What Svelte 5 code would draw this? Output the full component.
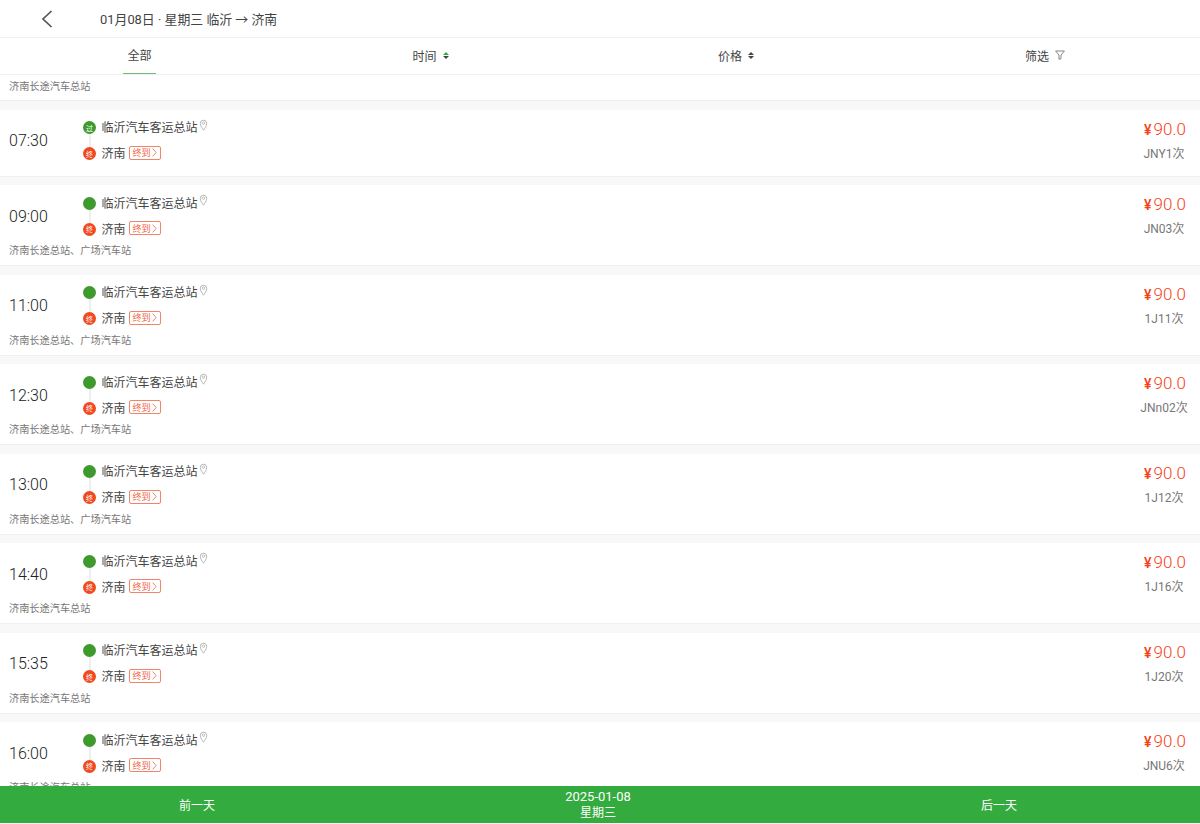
<script>
const rows = [
  { time: '07:30', code: 'JNY1次', pass: true, note: '' },
  { time: '09:00', code: 'JN03次', note: '济南长途总站、广场汽车站' },
  { time: '11:00', code: '1J11次', note: '济南长途总站、广场汽车站' },
  { time: '12:30', code: 'JNn02次', note: '济南长途总站、广场汽车站' },
  { time: '13:00', code: '1J12次', note: '济南长途总站、广场汽车站' },
  { time: '14:40', code: '1J16次', note: '济南长途汽车总站' },
  { time: '15:35', code: '1J20次', note: '济南长途汽车总站' },
  { time: '16:00', code: 'JNU6次', note: '济南长途汽车总站' }
];
</script>

<div class="page">
  <header class="topbar">
    <svg class="back" width="12" height="18" viewBox="0 0 12 18"><path d="M10.5 1 2 9l8.5 8" fill="none" stroke="#555" stroke-width="1.7"/></svg>
    <span class="title">01月08日 · 星期三 临沂 → 济南</span>
  </header>

  <nav class="tabs">
    <div class="tab active"><span>全部</span></div>
    <div class="tab">
      <span>时间</span>
      <span class="sort"><i class="up green"></i><i class="down"></i></span>
    </div>
    <div class="tab">
      <span>价格</span>
      <span class="sort"><i class="up"></i><i class="down"></i></span>
    </div>
    <div class="tab">
      <span>筛选</span>
      <svg width="10" height="10" viewBox="0 0 10 10"><path d="M.6 1h8.8L6 5v3.6L4 9.4V5z" fill="none" stroke="#777" stroke-width=".9"/></svg>
    </div>
  </nav>

  <main class="list">
    <div class="partial">济南长途汽车总站</div>
    {#each rows as row}
      <section class="row" class:short={!row.note}>
        <div class="main">
          <div class="time">{row.time}</div>
          <div class="stops">
            <div class="stop">
              <span class="dot start">{row.pass ? '过' : ''}</span>
              <span class="name">临沂汽车客运总站</span>
              <svg class="pin" width="9" height="12" viewBox="0 0 9 12"><path d="M4.5 11.2C2.9 8.6 1.3 7 1.3 4.4a3.2 3.2 0 0 1 6.4 0C7.7 7 6.1 8.6 4.5 11.2z" fill="none" stroke="#a5a5a5" stroke-width=".8"/><circle cx="4.5" cy="4.2" r="1.2" fill="none" stroke="#a5a5a5" stroke-width=".7"/></svg>
            </div>
            <div class="stop">
              <span class="dot end">终</span>
              <span class="name">济南</span>
              <span class="tag">终到<svg width="5" height="9" viewBox="0 0 5 9"><path d="M.6.6 4.2 4.5.6 8.4" fill="none" stroke="#f0633f" stroke-width=".8"/></svg></span>
            </div>
          </div>
          <div class="right">
            <div class="price"><span class="yen">¥</span>90.0</div>
            <div class="code">{row.code}</div>
          </div>
        </div>
        {#if row.note}<div class="note">{row.note}</div>{/if}
      </section>
    {/each}
  </main>

  <footer class="bottom">
    <div>前一天</div>
    <div class="date"><span>2025-01-08</span><span>星期三</span></div>
    <div>后一天</div>
  </footer>
</div>

<style>
:global(body) {
  background: #fff;
  font-family: Roboto, "Noto Sans CJK SC", sans-serif;
}

.page {
  display: flex;
  flex-direction: column;
  height: 823px;
  overflow: hidden;
}

.topbar {
  flex: none;
  height: 37px;
  display: flex;
  align-items: center;
  border-bottom: 1px solid #f0f0f0;
  padding-left: 41px;
  color: #444;
  font-size: 12.9px;
}

.back {
  margin-right: 47px;
}

.tabs {
  flex: none;
  height: 36px;
  display: grid;
  grid-template-columns: 279px 303px 308px 1fr;
  border-bottom: 1px solid #f0f0f0;
  font-size: 12px;
  color: #444;
}

.tab {
  display: flex;
  align-items: center;
  justify-content: center;
  gap: 6px;
  padding-bottom: 2px;
}

.tab.active {
  padding-bottom: 0;
}

.tab.active span {
  height: 100%;
  display: flex;
  align-items: center;
  padding: 0 4px 2px;
  border-bottom: 1px solid #6fbf73;
  box-sizing: border-box;
}

.sort {
  display: flex;
  flex-direction: column;
  gap: 1px;
}

.sort i {
  display: block;
  width: 0;
  height: 0;
  border-left: 3px solid transparent;
  border-right: 3px solid transparent;
}

.up {
  border-bottom: 3px solid #444;
}

.up.green {
  border-bottom-color: #35a93c;
}

.down {
  border-top: 3px solid #444;
}

.list {
  flex: 1;
  min-height: 0;
  overflow: hidden;
  background: #f8f8f8;
}

.partial {
  background: #fff;
  height: 25px;
  border-bottom: 1px solid #f0f0f0;
  padding-left: 9px;
  font-size: 10.2px;
  line-height: 24px;
  color: #777;
}

.row {
  background: #fff;
  margin-top: 8.5px;
  height: 80px;
  border-bottom: 1px solid #f0f0f0;
}

.row.short {
  height: 66px;
}

.main {
  display: flex;
  align-items: center;
  height: 62px;
  padding: 0 10px 0 9px;
  box-sizing: border-box;
}

.time {
  width: 74px;
  font-size: 16px;
  font-weight: 300;
  color: #222;
}

.stops {
  flex: 1;
}

.stop {
  display: flex;
  align-items: center;
  height: 26px;
  font-size: 12px;
  color: #444;
  position: relative;
}

.stop:first-child::after {
  content: "";
  position: absolute;
  left: 5.5px;
  top: 19px;
  width: 2px;
  height: 14px;
  background: #eee;
}

.dot {
  width: 13px;
  height: 13px;
  border-radius: 50%;
  margin-right: 5.5px;
  font-size: 7px;
  color: #fff;
  display: flex;
  align-items: center;
  justify-content: center;
  position: relative;
  z-index: 1;
}

.start {
  background: #3e9a2d;
}

.end {
  background: #f1491f;
}

.name {
  margin-bottom: 2px;
}

.pin {
  margin: -6px 0 0 1px;
}

.tag {
  margin: 0 0 2px 3px;
  height: 12px;
  width: 30px;
  border: 1px solid #f0856a;
  border-radius: 2px;
  color: #f0633f;
  font-size: 9px;
  display: flex;
  align-items: center;
  justify-content: center;
  gap: 1px;
}

.right {
  width: 52px;
  margin-top: -2px;
  text-align: center;
}

.price {
  padding-left: 2px;
  font-size: 17px;
  font-weight: 300;
  color: #f8401a;
  white-space: nowrap;
}

.yen {
  font-size: 14px;
  font-weight: 500;
  margin-right: 2px;
}

.code {
  margin: 5px -8px 0;
  font-size: 12px;
  color: #777;
}

.note {
  margin-top: -3px;
  padding-left: 9px;
  font-size: 10.2px;
  line-height: 14px;
  color: #777;
}

.bottom {
  flex: none;
  height: 37px;
  background: #33ab3f;
  color: #fff;
  font-size: 12px;
  display: grid;
  grid-template-columns: 394px 408px 394px;
  align-items: center;
  text-align: center;
}

.date {
  display: flex;
  flex-direction: column;
  font-size: 13px;
  line-height: 16px;
}

.date span:last-child {
  font-size: 12px;
}
</style>
